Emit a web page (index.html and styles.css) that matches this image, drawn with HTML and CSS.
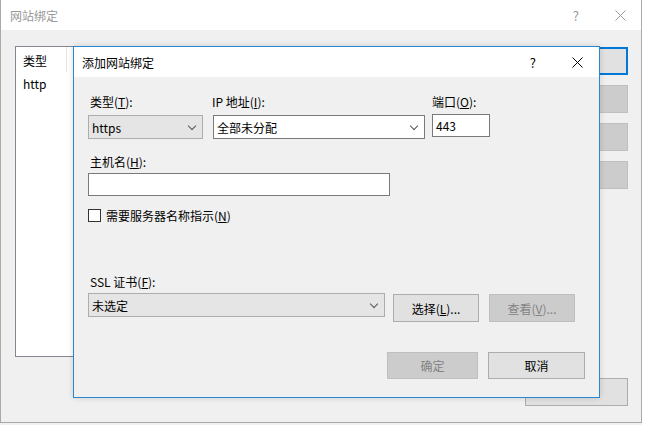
FILE: index.html
```html
<!DOCTYPE html>
<html lang="zh-CN">
<head>
<meta charset="UTF-8">
<title>网站绑定</title>
<link rel="stylesheet" href="styles.css">
</head>
<body>
	<div class="window">
		<div class="titlebar">
			<span class="title">网站绑定</span>
			<span class="help">?</span>
			<svg class="close" width="11" height="11" viewBox="0 0 11 11"><path d="M0.5 0.5L10.5 10.5M10.5 0.5L0.5 10.5" stroke="#999" stroke-width="1"/></svg>
		</div>
		<div class="client">
			<div class="list">
				<div class="list-head"><span class="col">类型</span></div>
				<div class="list-row">http</div>
			</div>
			<div class="side">
				<div class="sbtn focus"></div>
				<div class="sbtn off"></div>
				<div class="sbtn off"></div>
				<div class="sbtn off"></div>
				<div class="sbtn last"></div>
			</div>
		</div>
	</div>

	<div class="dialog">
		<div class="dtitle">
			<span class="title">添加网站绑定</span>
			<span class="help">?</span>
			<svg class="close" width="11" height="11" viewBox="0 0 11 11"><path d="M0.5 0.5L10.5 10.5M10.5 0.5L0.5 10.5" stroke="#000" stroke-width="1"/></svg>
		</div>
		<div class="dbody">
			<div class="row1">
				<div class="field f-type">
					<label>类型(<u>T</u>):</label>
					<div class="select gray"><span>https</span><i class="chev"></i></div>
				</div>
				<div class="field f-ip">
					<label>IP 地址(<u>I</u>):</label>
					<div class="select"><span>全部未分配</span><i class="chev"></i></div>
				</div>
				<div class="field f-port">
					<label>端口(<u>O</u>):</label>
					<div class="input port">443</div>
				</div>
			</div>
			<div class="field f-host">
				<label>主机名(<u>H</u>):</label>
				<div class="input host"></div>
			</div>
			<div class="check">
				<span class="box"></span>
				<span>需要服务器名称指示(<u>N</u>)</span>
			</div>
			<div class="field f-ssl">
				<label>SSL 证书(<u>F</u>):</label>
				<div class="ssl-row">
					<div class="select gray ssl"><span>未选定</span><i class="chev"></i></div>
					<button class="btn">选择(<u>L</u>)...</button>
					<button class="btn disabled">查看(<u>V</u>)...</button>
				</div>
			</div>
			<div class="footer">
				<button class="btn disabled ok">确定</button>
				<button class="btn cancel">取消</button>
			</div>
		</div>
	</div>
</body>
</html>
```

FILE: styles.css
```css
html {
	background: #f3f3f3;
}
body {
	margin: 0;
	font-family: "Noto Sans CJK SC", "Microsoft YaHei", sans-serif;
	font-size: 12px;
	color: #000;
	position: relative;
	width: 645px;
	height: 425px;
	overflow: hidden;
	background: linear-gradient(to right, #f0f0f0 642px, #fff 642px);
}
u {
	text-decoration: underline;
	text-underline-offset: 1px;
}

/* outer window */
.window {
	width: 642px;
	height: 423px;
	box-sizing: border-box;
	border: 1px solid #aaa;
	border-top: none;
	background: #f0f0f0;
	display: flex;
	flex-direction: column;
}
.titlebar {
	height: 30px;
	background: #fff;
	display: flex;
	align-items: center;
	padding-left: 9px;
	flex: none;
}
.titlebar .title {
	color: #999;
	flex: 1;
}
.titlebar .help {
	color: #999;
	font-size: 13px;
	margin-right: 36px;
}
.titlebar .close {
	margin-right: 15px;
}
.client {
	flex: 1;
	display: flex;
	justify-content: space-between;
}
.list {
	margin: 16px 0 0 14px;
	width: 200px;
	height: 311px;
	box-sizing: border-box;
	border: 1px solid #828790;
	background: #fff;
}
.list-head {
	height: 25px;
	display: flex;
}
.list-head .col {
	width: 43px;
	padding: 5px 0 0 7px;
	border-right: 1px solid #e5e5e5;
}
.list-row {
	padding: 3px 0 0 7px;
}
.side {
	margin: 17px 13px 16px 0;
	display: flex;
	flex-direction: column;
	gap: 10px;
}
.sbtn {
	width: 103px;
	height: 28px;
	box-sizing: border-box;
	border: 1px solid #adadad;
	background: #e1e1e1;
}
.sbtn.focus {
	border: 2px solid #0078d7;
}
.sbtn.off {
	background: #cccccc;
	border-color: #bfbfbf;
}
.sbtn.last {
	margin-top: auto;
}

/* dialog on top */
.dialog {
	position: absolute;
	left: 73px;
	top: 46px;
	width: 527px;
	height: 352px;
	box-sizing: border-box;
	border: 1px solid #2a86cf;
	background: #f0f0f0;
	box-shadow: 0 0 6px rgba(0, 0, 0, 0.15);
}
.dtitle {
	height: 30px;
	background: #fff;
	display: flex;
	align-items: center;
	padding-left: 8px;
}
.dtitle .title {
	flex: 1;
}
.dtitle .help {
	font-size: 13px;
	margin-right: 36px;
}
.dtitle .close {
	margin-right: 16px;
}
.dbody {
	padding: 17px 14px 0;
}
.field label {
	display: block;
	height: 16px;
	line-height: 16px;
	padding-left: 2px;
}
.row1 {
	display: flex;
	align-items: flex-start;
}
.f-type {
	width: 115px;
}
.f-ip {
	width: 212px;
	margin-left: 10px;
}
.f-ip label {
	padding-left: 0;
	margin-left: -1px;
}
.f-port {
	width: 58px;
	margin-left: 7px;
}
.f-port label {
	padding-left: 0;
}
.select {
	margin-top: 5px;
	height: 24px;
	box-sizing: border-box;
	border: 1px solid #7a7a7a;
	background: #fff;
	display: flex;
	align-items: center;
	padding: 0 7px 0 3px;
}
.select span {
	flex: 1;
}
.select.gray {
	background: #e5e5e5;
	border-color: #adadad;
}
.chev {
	width: 5px;
	height: 5px;
	border-right: 1px solid #555;
	border-bottom: 1px solid #555;
	transform: rotate(45deg);
	margin-top: -3px;
}
.input {
	box-sizing: border-box;
	border: 1px solid #7a7a7a;
	background: #fff;
	padding-left: 3px;
	display: flex;
	align-items: center;
}
.port {
	margin-top: 4px;
	height: 23px;
}
.f-host {
	margin-top: 15px;
}
.f-host label {
	margin-bottom: 3px;
}
.host {
	width: 302px;
	height: 23px;
}
.check {
	margin-top: 13px;
	height: 13px;
	display: flex;
	align-items: center;
	gap: 5px;
}
.check .box {
	width: 13px;
	height: 13px;
	box-sizing: border-box;
	border: 1px solid #333;
	background: #fff;
}
.f-ssl {
	margin-top: 52px;
}
.ssl-row {
	margin-top: 3px;
	display: flex;
	align-items: flex-start;
}
.ssl-row .select {
	margin-top: 0;
}
.ssl {
	width: 297px;
}
.btn {
	font: inherit;
	color: #000;
	height: 28px;
	width: 86px;
	box-sizing: border-box;
	border: 1px solid #adadad;
	background: #e1e1e1;
	padding: 0;
}
.ssl-row .btn {
	margin-top: 1px;
	margin-left: 8px;
}
.ssl-row .btn.disabled {
	margin-left: 10px;
}
.btn.disabled {
	background: #cccccc;
	border-color: #bfbfbf;
	color: #838383;
}
.footer {
	margin-top: 30px;
	display: flex;
	justify-content: flex-end;
	gap: 10px;
}
.footer .btn {
	height: 27px;
}
.ok {
	width: 91px;
}
.cancel {
	width: 97px;
}
```
